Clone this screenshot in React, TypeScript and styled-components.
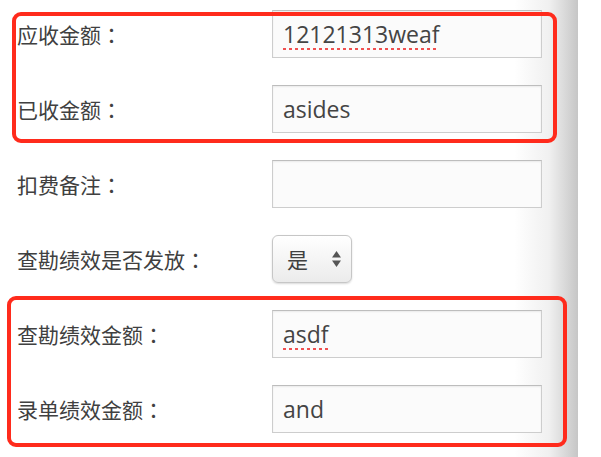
import styled, { createGlobalStyle } from 'styled-components'

const GlobalStyle = createGlobalStyle`
  html, body {
    margin: 0;
    padding: 0;
    background: #fff;
  }
`

const Form = styled.form`
  width: 578px;
  height: 457px;
  box-sizing: border-box;
  padding-top: 10px;
  display: flex;
  flex-direction: column;
  gap: 27px;
  background: linear-gradient(to right, #fff 0%, #fff 89%, #f0f0f0 95%, #c6c6c6 100%);
`

// red annotation frame drawn round a group of rows
const Group = styled.div<{ $inset: string }>`
  position: relative;
  display: flex;
  flex-direction: column;
  gap: 27px;

  &::after {
    content: '';
    position: absolute;
    inset: ${(p) => p.$inset};
    border: 4px solid #ff2b1c;
    border-radius: 9px;
    pointer-events: none;
  }
`

const Row = styled.div`
  display: flex;
  align-items: center;
  height: 48px;
`

const Label = styled.label`
  width: 255px;
  padding-left: 17px;
  font-family: 'Noto Sans CJK TC', 'Noto Sans CJK SC', sans-serif;
  font-size: 21px;
  color: #404040;
  white-space: nowrap;
`

const Input = styled.input<{ $typo?: boolean }>`
  width: 270px;
  height: 48px;
  box-sizing: border-box;
  padding: 0 10px;
  border: 1px solid #cdcdcd;
  border-top-color: #bdbdbd;
  background: #fbfbfb;
  box-shadow: inset 0 1px 2px rgba(0, 0, 0, 0.07);
  font-family: 'Open Sans', 'Noto Sans CJK SC', sans-serif;
  font-size: 23px;
  color: #444;
  outline: none;
  text-decoration: ${(p) => (p.$typo ? 'underline dotted #f05050' : 'none')};
  text-decoration-thickness: 3px;
  text-underline-offset: 5px;
`

const SelectWrap = styled.div`
  position: relative;
  width: 80px;
  height: 48px;
`

const Select = styled.select`
  appearance: none;
  width: 100%;
  height: 100%;
  padding-left: 14px;
  border: 1px solid #c6c6c6;
  border-radius: 6px;
  background: linear-gradient(#ffffff, #ebebeb);
  box-shadow: 0 1px 2px rgba(0, 0, 0, 0.15);
  font-family: 'Noto Sans CJK SC', sans-serif;
  font-size: 21px;
  color: #404040;
  outline: none;
`

const Arrows = styled.svg`
  position: absolute;
  right: 11px;
  top: 16px;
  pointer-events: none;
`

export default function App() {
  return (
    <>
      <GlobalStyle />
      <Form>
        <Group $inset="2px 21px -10px 12px">
          <Row>
            <Label>应收金额：</Label>
            <Input readOnly defaultValue="12121313weaf" $typo />
          </Row>
          <Row>
            <Label>已收金额：</Label>
            <Input readOnly defaultValue="asides" />
          </Row>
        </Group>
        <Row>
          <Label>扣费备注：</Label>
          <Input readOnly defaultValue="" />
        </Row>
        <Row>
          <Label>查勘绩效是否发放：</Label>
          <SelectWrap>
            <Select defaultValue="1">
              <option value="1">是</option>
              <option value="0">否</option>
            </Select>
            <Arrows width="9" height="16" viewBox="0 0 9 16">
              <path d="M4.5 0 L9 6.5 H0 Z" fill="#555" />
              <path d="M4.5 16 L9 9.5 H0 Z" fill="#555" />
            </Arrows>
          </SelectWrap>
        </Row>
        <Group $inset="-14px 11px -14px 7px">
          <Row>
            <Label>查勘绩效金额：</Label>
            <Input readOnly defaultValue="asdf" $typo />
          </Row>
          <Row>
            <Label>录单绩效金额：</Label>
            <Input readOnly defaultValue="and" />
          </Row>
        </Group>
      </Form>
    </>
  )
}
